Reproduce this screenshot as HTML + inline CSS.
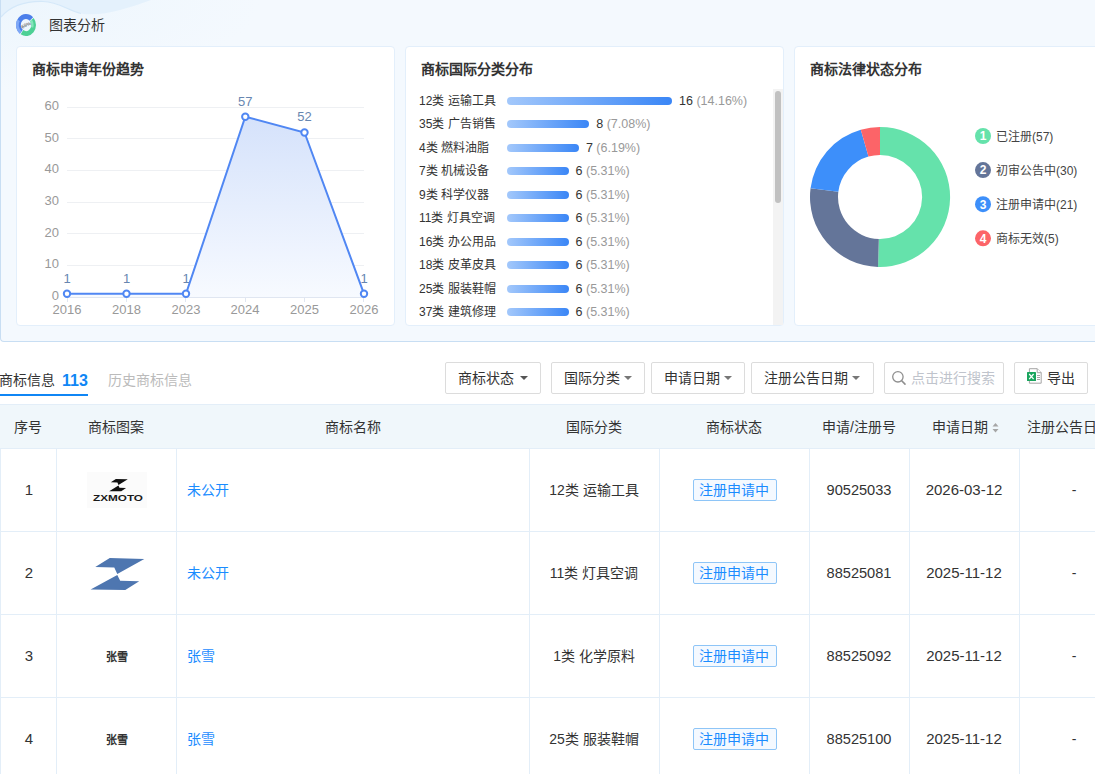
<!DOCTYPE html>
<html lang="zh-CN">
<head>
<meta charset="utf-8">
<style>
*{box-sizing:border-box;margin:0;padding:0}
html,body{width:1095px;height:774px;overflow:hidden;background:#fff}
body{position:relative;font-family:"Liberation Sans",sans-serif;color:#333;font-size:14px}
.a{position:absolute;white-space:nowrap}
.top{position:absolute;left:0;top:0;width:1120px;height:342px;border:1px solid #c8def3;border-right:none;border-top:none;border-radius:0 0 0 4px;background:radial-gradient(ellipse 260px 90px at 0 0,#edf6fd 0%,rgba(244,249,254,0) 100%),#f4f9fe;overflow:hidden}
.card{position:absolute;top:46px;width:379px;height:280px;background:#fff;border:1px solid #e3effb;border-radius:4px}
.ttl{position:absolute;font-weight:bold;font-size:14px;color:#333;line-height:20px}
svg{position:absolute;left:0;top:0}
.btn{position:absolute;top:362px;height:32px;border:1px solid #dcdcdc;border-radius:2px;background:#fff;font-size:14px;color:#333;line-height:30px}
.caret{display:inline-block;width:0;height:0;border-left:4px solid transparent;border-right:4px solid transparent;border-top:4px solid #555;vertical-align:middle;margin-left:6px;position:relative;top:-1px}
.th{position:absolute;white-space:nowrap;top:406px;height:43px;line-height:43px;text-align:center;font-size:14px;color:#333}
.td{position:absolute;text-align:center;font-size:14px;color:#333;height:82px;line-height:82px}
.vl{position:absolute;top:449px;width:1px;height:330px;background:#e3eef8}
.hl{position:absolute;left:0;width:1095px;height:1px;background:#e3eef8}
.tag{display:inline-block;height:22px;line-height:20px;padding:0 6px;border:1px solid #8ec5f7;background:#f4f9ff;color:#1a8cff;border-radius:2px;font-size:14px;vertical-align:middle}
.lnk{color:#1a8cff}
</style>
</head>
<body>
<div class="top">
  <svg width="400" height="40" style="left:0;top:0">
    <path d="M0 17 C 8 8, 22 1, 42 1.5 C 58 2, 66 10, 80 13.5 C 100 17, 125 9, 150 0 L0 0 Z" fill="#e4f1fc"/>
    <path d="M0 17 C 8 8, 22 1, 42 1.5 C 58 2, 66 10, 80 13.5" fill="none" stroke="#d4e8f9" stroke-width="1.2"/>
  </svg>
</div>
<!-- header icon -->
<svg width="24" height="26" style="left:14px;top:12px">
  <path d="M5.84 21.67 A10 11 0 1 1 19.07 5.22 L15.68 8.76 A5.2 6 0 1 0 8.80 17.73 Z" fill="#4c7fea"/>
  <path d="M5.84 21.67 A10 11 0 0 1 3.34 7.50 L5.76 8.90 A7.2 8.2 0 0 0 7.57 19.46 Z" fill="#7fa8f6"/>
  <path d="M19.66 5.93 A10 11 0 0 1 6.70 22.33 L9.24 18.09 A5.2 6 0 0 0 15.98 9.14 Z" fill="#4dd095"/>
  <path d="M17.82 7.60 A7.6 8.4 0 0 1 19.14 15.87 L16.89 15.05 A5.2 6 0 0 0 15.98 9.14 Z" fill="#84e5bb"/>
  <text x="12" y="14.8" font-size="5" text-anchor="middle" fill="#555" font-family="Liberation Sans" transform="rotate(-25 12 13)">68%</text>
</svg>
<div class="a" style="left:49px;top:15px;font-size:14px;line-height:20px;color:#333">图表分析</div>

<div class="card" style="left:16px"></div>
<div class="card" style="left:405px"></div>
<div class="card" style="left:794px;width:400px"></div>

<div class="ttl" style="left:32px;top:59px">商标申请年份趋势</div>
<div class="ttl" style="left:421px;top:59px">商标国际分类分布</div>
<div class="ttl" style="left:810px;top:59px">商标法律状态分布</div>

<!-- line chart -->
<svg width="1095" height="774">
  <defs>
    <linearGradient id="ag" x1="0" y1="0" x2="0" y2="1">
      <stop offset="0" stop-color="#d5e2fb"/>
      <stop offset="1" stop-color="#f7faff"/>
    </linearGradient>
  </defs>
  <g stroke="#eef0f3" stroke-width="1">
    <line x1="67" x2="364" y1="107.5" y2="107.5"/>
    <line x1="67" x2="364" y1="138.5" y2="138.5"/>
    <line x1="67" x2="364" y1="170.5" y2="170.5"/>
    <line x1="67" x2="364" y1="202.5" y2="202.5"/>
    <line x1="67" x2="364" y1="233.5" y2="233.5"/>
    <line x1="67" x2="364" y1="265.5" y2="265.5"/>
  </g>
  <g stroke="#e0e6f1" stroke-width="1">
    <line x1="67" x2="364" y1="297.5" y2="297.5"/>
    <line x1="67.5" x2="67.5" y1="297" y2="302"/>
    <line x1="126.5" x2="126.5" y1="297" y2="302"/>
    <line x1="185.5" x2="185.5" y1="297" y2="302"/>
    <line x1="245.5" x2="245.5" y1="297" y2="302"/>
    <line x1="304.5" x2="304.5" y1="297" y2="302"/>
    <line x1="363.5" x2="363.5" y1="297" y2="302"/>
  </g>
  <g font-family="Liberation Sans" font-size="13" fill="#999" text-anchor="end">
    <text x="59" y="110.3">60</text>
    <text x="59" y="141.6">50</text>
    <text x="59" y="173.3">40</text>
    <text x="59" y="205">30</text>
    <text x="59" y="236.6">20</text>
    <text x="59" y="268.3">10</text>
    <text x="59" y="300.2">0</text>
  </g>
  <g font-family="Liberation Sans" font-size="13" fill="#999" text-anchor="middle">
    <text x="67" y="314">2016</text>
    <text x="126.5" y="314">2018</text>
    <text x="186" y="314">2023</text>
    <text x="245" y="314">2024</text>
    <text x="304.5" y="314">2025</text>
    <text x="364" y="314">2026</text>
  </g>
  <polygon points="67,297 67,293.8 126.5,293.8 186,293.8 245.3,116.7 304.5,132.5 364,293.8 364,297" fill="url(#ag)"/>
  <polyline points="67,293.8 126.5,293.8 186,293.8 245.3,116.7 304.5,132.5 364,293.8" fill="none" stroke="#5087f3" stroke-width="2"/>
  <g fill="#fff" stroke="#5087f3" stroke-width="2">
    <circle cx="67" cy="293.8" r="3.2"/>
    <circle cx="126.5" cy="293.8" r="3.2"/>
    <circle cx="186" cy="293.8" r="3.2"/>
    <circle cx="245.3" cy="116.7" r="3.2"/>
    <circle cx="304.5" cy="132.5" r="3.2"/>
    <circle cx="364" cy="293.8" r="3.2"/>
  </g>
  <g font-family="Liberation Sans" font-size="13" fill="#6786b0" text-anchor="middle">
    <text x="67" y="283">1</text>
    <text x="126.5" y="283">1</text>
    <text x="186" y="283">1</text>
    <text x="245.3" y="106">57</text>
    <text x="304.5" y="121">52</text>
    <text x="364" y="283">1</text>
  </g>
</svg>

<!-- bar list -->
<div class="a" style="left:405px;top:89px;width:368px;height:236px;overflow:hidden">
<div class="a" style="left:14px;top:2.00px;line-height:20px;font-size:12px;color:#333">12类 运输工具</div>
<div class="a" style="left:101.50px;top:8.00px;width:165.50px;height:8px;border-radius:4px;background:linear-gradient(90deg,#a3c8fb,#3a86f6)"></div>
<div class="a" style="left:274.00px;top:2.00px;line-height:20px;font-size:12.5px;color:#333">16 <span style="color:#999">(14.16%)</span></div>
<div class="a" style="left:14px;top:25.45px;line-height:20px;font-size:12px;color:#333">35类 广告销售</div>
<div class="a" style="left:101.50px;top:31.45px;width:82.75px;height:8px;border-radius:4px;background:linear-gradient(90deg,#a3c8fb,#3a86f6)"></div>
<div class="a" style="left:191.25px;top:25.45px;line-height:20px;font-size:12.5px;color:#333">8 <span style="color:#999">(7.08%)</span></div>
<div class="a" style="left:14px;top:48.90px;line-height:20px;font-size:12px;color:#333">4类 燃料油脂</div>
<div class="a" style="left:101.50px;top:54.90px;width:72.41px;height:8px;border-radius:4px;background:linear-gradient(90deg,#a3c8fb,#3a86f6)"></div>
<div class="a" style="left:180.91px;top:48.90px;line-height:20px;font-size:12.5px;color:#333">7 <span style="color:#999">(6.19%)</span></div>
<div class="a" style="left:14px;top:72.35px;line-height:20px;font-size:12px;color:#333">7类 机械设备</div>
<div class="a" style="left:101.50px;top:78.35px;width:62.06px;height:8px;border-radius:4px;background:linear-gradient(90deg,#a3c8fb,#3a86f6)"></div>
<div class="a" style="left:170.56px;top:72.35px;line-height:20px;font-size:12.5px;color:#333">6 <span style="color:#999">(5.31%)</span></div>
<div class="a" style="left:14px;top:95.80px;line-height:20px;font-size:12px;color:#333">9类 科学仪器</div>
<div class="a" style="left:101.50px;top:101.80px;width:62.06px;height:8px;border-radius:4px;background:linear-gradient(90deg,#a3c8fb,#3a86f6)"></div>
<div class="a" style="left:170.56px;top:95.80px;line-height:20px;font-size:12.5px;color:#333">6 <span style="color:#999">(5.31%)</span></div>
<div class="a" style="left:14px;top:119.25px;line-height:20px;font-size:12px;color:#333">11类 灯具空调</div>
<div class="a" style="left:101.50px;top:125.25px;width:62.06px;height:8px;border-radius:4px;background:linear-gradient(90deg,#a3c8fb,#3a86f6)"></div>
<div class="a" style="left:170.56px;top:119.25px;line-height:20px;font-size:12.5px;color:#333">6 <span style="color:#999">(5.31%)</span></div>
<div class="a" style="left:14px;top:142.70px;line-height:20px;font-size:12px;color:#333">16类 办公用品</div>
<div class="a" style="left:101.50px;top:148.70px;width:62.06px;height:8px;border-radius:4px;background:linear-gradient(90deg,#a3c8fb,#3a86f6)"></div>
<div class="a" style="left:170.56px;top:142.70px;line-height:20px;font-size:12.5px;color:#333">6 <span style="color:#999">(5.31%)</span></div>
<div class="a" style="left:14px;top:166.15px;line-height:20px;font-size:12px;color:#333">18类 皮革皮具</div>
<div class="a" style="left:101.50px;top:172.15px;width:62.06px;height:8px;border-radius:4px;background:linear-gradient(90deg,#a3c8fb,#3a86f6)"></div>
<div class="a" style="left:170.56px;top:166.15px;line-height:20px;font-size:12.5px;color:#333">6 <span style="color:#999">(5.31%)</span></div>
<div class="a" style="left:14px;top:189.60px;line-height:20px;font-size:12px;color:#333">25类 服装鞋帽</div>
<div class="a" style="left:101.50px;top:195.60px;width:62.06px;height:8px;border-radius:4px;background:linear-gradient(90deg,#a3c8fb,#3a86f6)"></div>
<div class="a" style="left:170.56px;top:189.60px;line-height:20px;font-size:12.5px;color:#333">6 <span style="color:#999">(5.31%)</span></div>
<div class="a" style="left:14px;top:213.05px;line-height:20px;font-size:12px;color:#333">37类 建筑修理</div>
<div class="a" style="left:101.50px;top:219.05px;width:62.06px;height:8px;border-radius:4px;background:linear-gradient(90deg,#a3c8fb,#3a86f6)"></div>
<div class="a" style="left:170.56px;top:213.05px;line-height:20px;font-size:12.5px;color:#333">6 <span style="color:#999">(5.31%)</span></div>
</div>
<div class="a" style="left:773px;top:89px;width:10px;height:236px;background:#f3f3f3"></div>
<div class="a" style="left:775px;top:91px;width:6px;height:112px;background:#c1c1c1;border-radius:3px"></div>

<!-- donut -->
<svg width="1095" height="774"><path d="M880.00 127.00 A70 70 0 1 1 878.05 266.97 L878.83 238.98 A42 42 0 1 0 880.00 155.00 Z" fill="#65e2ab"/>
<path d="M878.05 266.97 A70 70 0 0 1 810.55 188.27 L838.33 191.76 A42 42 0 0 0 878.83 238.98 Z" fill="#647599"/>
<path d="M810.55 188.27 A70 70 0 0 1 860.79 129.69 L868.47 156.61 A42 42 0 0 0 838.33 191.76 Z" fill="#3d8ffa"/>
<path d="M860.79 129.69 A70 70 0 0 1 880.00 127.00 L880.00 155.00 A42 42 0 0 0 868.47 156.61 Z" fill="#fc6468"/>
<circle cx="983" cy="136.00" r="8" fill="#65e2ab"/>
<text x="983" y="140.30" font-family="Liberation Sans" font-size="12" font-weight="bold" fill="#fff" text-anchor="middle">1</text>
<text x="996" y="140.50" font-family="Liberation Sans" font-size="12" fill="#444">已注册(57)</text>
<circle cx="983" cy="170.10" r="8" fill="#647599"/>
<text x="983" y="174.40" font-family="Liberation Sans" font-size="12" font-weight="bold" fill="#fff" text-anchor="middle">2</text>
<text x="996" y="174.60" font-family="Liberation Sans" font-size="12" fill="#444">初审公告中(30)</text>
<circle cx="983" cy="204.20" r="8" fill="#3d8ffa"/>
<text x="983" y="208.50" font-family="Liberation Sans" font-size="12" font-weight="bold" fill="#fff" text-anchor="middle">3</text>
<text x="996" y="208.70" font-family="Liberation Sans" font-size="12" fill="#444">注册申请中(21)</text>
<circle cx="983" cy="238.30" r="8" fill="#fc6468"/>
<text x="983" y="242.60" font-family="Liberation Sans" font-size="12" font-weight="bold" fill="#fff" text-anchor="middle">4</text>
<text x="996" y="242.80" font-family="Liberation Sans" font-size="12" fill="#444">商标无效(5)</text></svg>

<!-- tabs -->
<div class="a" style="left:-1px;top:370px;font-size:14px;line-height:20px;color:#333;font-weight:500">商标信息</div>
<div class="a" style="left:62px;top:371px;font-size:16px;line-height:20px;color:#0f86f5;font-weight:bold">113</div>
<div class="a" style="left:0;top:394px;width:88px;height:2px;background:#0f86f5"></div>
<div class="a" style="left:108px;top:370px;font-size:14px;line-height:20px;color:#bbb">历史商标信息</div>

<div class="btn" style="left:445px;width:96px;padding-left:12px">商标状态<span class="caret"></span></div>
<div class="btn" style="left:551px;width:94px;padding-left:12px">国际分类<span class="caret" style="border-top-color:#777;margin-left:4px"></span></div>
<div class="btn" style="left:651px;width:94px;padding-left:12px">申请日期<span class="caret" style="border-top-color:#777;margin-left:4px"></span></div>
<div class="btn" style="left:751px;width:123px;padding-left:12px">注册公告日期<span class="caret" style="border-top-color:#777;margin-left:4px"></span></div>
<div class="btn" style="left:884px;width:120px;padding-left:26px;color:#c0c4cc">点击进行搜索</div>
<svg width="18" height="18" style="left:889px;top:368px"><circle cx="8.9" cy="8.8" r="5.2" fill="none" stroke="#8f8f8f" stroke-width="1.3"/><line x1="12.7" y1="12.8" x2="16" y2="16.1" stroke="#8f8f8f" stroke-width="1.6" stroke-linecap="round"/></svg>
<div class="btn" style="left:1014px;width:74px;padding-left:32px">导出</div>
<svg width="18" height="18" style="left:1026px;top:367px"><path d="M3.4 1.7 H11.2 L15.2 5.7 V16.2 H3.4 Z" fill="#fff" stroke="#a6a6a6" stroke-width="1"/><path d="M11.2 1.7 V5.7 H15.2" fill="#fff" stroke="#a6a6a6" stroke-width="1"/><g stroke="#a6a6a6" stroke-width="1"><line x1="11" y1="8.5" x2="14" y2="8.5"/><line x1="11" y1="10.5" x2="14" y2="10.5"/><line x1="11" y1="12.5" x2="14" y2="12.5"/></g><rect x="1" y="5" width="9" height="9" rx="0.6" fill="#1aa55e"/><path d="M3.2 7 L7.6 12.2 M7.6 7 L3.2 12.2" stroke="#fff" stroke-width="1.2"/></svg>

<!-- table -->
<div class="a" style="left:0;top:404px;width:1095px;height:45px;background:#f0f7fb;border-top:1px solid #e3eef8;border-bottom:1px solid #e3eef8"></div>
<div class="th" style="left:0;width:56px">序号</div>
<div class="th" style="left:56px;width:120px">商标图案</div>
<div class="th" style="left:176px;width:353px">商标名称</div>
<div class="th" style="left:529px;width:130px">国际分类</div>
<div class="th" style="left:659px;width:150px">商标状态</div>
<div class="th" style="left:809px;width:100px">申请/注册号</div>
<div class="th" style="left:905px;width:110px">申请日期</div>
<svg width="8" height="12" style="left:991.5px;top:421.5px"><path d="M3.5 1 L6.5 4.5 H0.5 Z M3.5 10.5 L6.5 7 H0.5 Z" fill="#a6a6a6"/></svg>
<div class="th" style="left:1027px;text-align:left">注册公告日期</div>

<div class="vl" style="left:0"></div>
<div class="vl" style="left:56px"></div>
<div class="vl" style="left:176px"></div>
<div class="vl" style="left:529px"></div>
<div class="vl" style="left:659px"></div>
<div class="vl" style="left:809px"></div>
<div class="vl" style="left:909px"></div>
<div class="vl" style="left:1019px"></div>
<div class="hl" style="top:531px"></div>
<div class="hl" style="top:614px"></div>
<div class="hl" style="top:697px"></div>

<div class="td" style="left:1px;top:449px;width:56px;font-size:15px">1</div>
<svg width="60" height="36" style="left:87px;top:472px"><rect width="60" height="36" fill="#fbfbfb"/><path d="M28.84 6.94 L40.80 7.25 L31.44 13.06 L30.40 10.62 L23.82 10.35 Z M31.44 13.48 L32.45 15.74 L39.03 15.89 L34.22 19.26 L22.20 19.15 Z" fill="#111"/><text x="31" y="28.8" font-family="Liberation Sans" font-weight="bold" font-size="8.4" text-anchor="middle" textLength="50" lengthAdjust="spacingAndGlyphs" fill="#1a1a1a">ZXMOTO</text></svg>
<div class="a lnk" style="left:187px;top:480px;line-height:20px">未公开</div>
<div class="td" style="left:529px;top:449px;width:130px">12类 运输工具</div>
<div class="a tag" style="left:693px;top:479px;width:84px;text-align:center;padding:0 3px 0 0">注册申请中</div>
<div class="td" style="left:809px;top:449px;width:100px;font-size:14.6px">90525033</div>
<div class="td" style="left:909px;top:449px;width:110px;font-size:15px">2026-03-12</div>
<div class="td" style="left:1019px;top:449px;width:110px">-</div>
<div class="td" style="left:1px;top:532px;width:56px;font-size:15px">2</div>
<svg width="60" height="36" style="left:87px;top:555px"><path d="M22.77 3.10 L57.30 3.90 L30.29 18.90 L27.28 12.60 L8.27 11.90 Z M30.29 19.99 L33.19 25.82 L52.20 26.20 L38.29 34.90 L3.60 34.62 Z" fill="#4e76b0"/></svg>
<div class="a lnk" style="left:187px;top:563px;line-height:20px">未公开</div>
<div class="td" style="left:529px;top:532px;width:130px">11类 灯具空调</div>
<div class="a tag" style="left:693px;top:562px;width:84px;text-align:center;padding:0 3px 0 0">注册申请中</div>
<div class="td" style="left:809px;top:532px;width:100px;font-size:14.6px">88525081</div>
<div class="td" style="left:909px;top:532px;width:110px;font-size:15px">2025-11-12</div>
<div class="td" style="left:1019px;top:532px;width:110px">-</div>
<div class="td" style="left:1px;top:615px;width:56px;font-size:15px">3</div>
<div class="a" style="left:106px;top:646.5px;font-size:11px;line-height:20px;font-weight:bold;color:#333;font-family:'Liberation Serif',serif">张雪</div>
<div class="a lnk" style="left:187px;top:646px;line-height:20px">张雪</div>
<div class="td" style="left:529px;top:615px;width:130px">1类 化学原料</div>
<div class="a tag" style="left:693px;top:645px;width:84px;text-align:center;padding:0 3px 0 0">注册申请中</div>
<div class="td" style="left:809px;top:615px;width:100px;font-size:14.6px">88525092</div>
<div class="td" style="left:909px;top:615px;width:110px;font-size:15px">2025-11-12</div>
<div class="td" style="left:1019px;top:615px;width:110px">-</div>
<div class="td" style="left:1px;top:698px;width:56px;font-size:15px">4</div>
<div class="a" style="left:106px;top:729.5px;font-size:11px;line-height:20px;font-weight:bold;color:#333;font-family:'Liberation Serif',serif">张雪</div>
<div class="a lnk" style="left:187px;top:729px;line-height:20px">张雪</div>
<div class="td" style="left:529px;top:698px;width:130px">25类 服装鞋帽</div>
<div class="a tag" style="left:693px;top:728px;width:84px;text-align:center;padding:0 3px 0 0">注册申请中</div>
<div class="td" style="left:809px;top:698px;width:100px;font-size:14.6px">88525100</div>
<div class="td" style="left:909px;top:698px;width:110px;font-size:15px">2025-11-12</div>
<div class="td" style="left:1019px;top:698px;width:110px">-</div>
</body>
</html>
